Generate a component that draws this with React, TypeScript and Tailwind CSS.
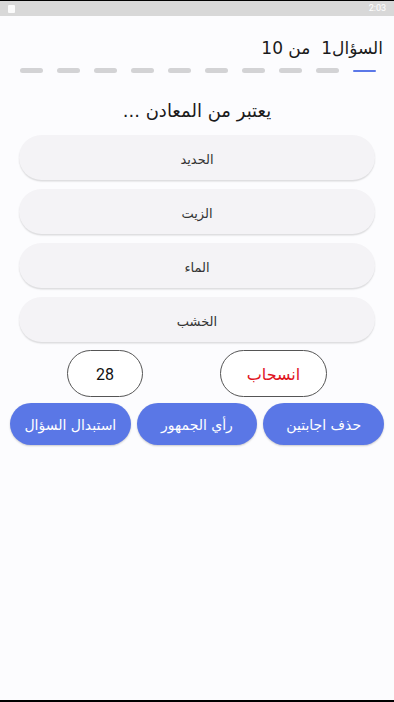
import React from "react";

const options = ["الحديد", "الزيت", "الماء", "الخشب"];
const lifelines = ["حذف اجابتين", "رأي الجمهور", "استبدال السؤال"];

export default function App() {
  return (
    <div
      className="w-[394px] h-[702px] bg-[#fcfcfe] flex flex-col overflow-hidden"
      style={{ fontFamily: '"DejaVu Sans", "Noto Sans", sans-serif' }}
    >
      <div className="h-[16px] bg-[#d8d8d8] border-t border-black flex items-center justify-between px-[8px]">
        <div className="w-[7px] h-[8px] bg-white rounded-[1px] opacity-90" />
        <span className="text-[9px] text-white leading-none" style={{ fontFamily: "Roboto, sans-serif" }}>
          2:03
        </span>
      </div>

      <div dir="rtl" className="flex flex-col flex-1">
        <div className="pt-[20px] pr-[11px] h-[43px]">
          <div className="text-[17px] leading-[24px] text-[#1a1a1a] whitespace-pre">
            السؤال1  من 10
          </div>
        </div>

        <div className="h-[5px] mt-[9px] px-[18px] flex items-center gap-[14px]">
          {Array.from({ length: 10 }).map((_, i) =>
            i === 0 ? (
              <div key={i} className="w-[23px] h-[2px] bg-[#5b78e8] rounded-full" />
            ) : (
              <div key={i} className="w-[23px] h-[5px] bg-[#d3d3d5] rounded-full" />
            )
          )}
        </div>

        <div className="mt-[25px] text-center text-[18px] leading-[26px] text-[#1a1a1a]">
          يعتبر من المعادن ...
        </div>

        <div className="mt-[11px] px-[19px] flex flex-col gap-[9px]">
          {options.map((o) => (
            <div
              key={o}
              className="h-[45px] pt-[4px] rounded-full bg-[#f4f3f6] shadow-[0_1.5px_1.5px_rgba(0,0,0,0.13)] flex items-center justify-center text-[13px] text-[#333]"
            >
              {o}
            </div>
          ))}
        </div>

        <div className="mt-[8px] px-[67px] flex justify-between">
          <div className="w-[107px] h-[47px] pt-[2px] rounded-full border border-[#555] bg-white flex items-center justify-center text-[16px] text-[#e0141e]">
            انسحاب
          </div>
          <div
            className="w-[76px] h-[47px] pt-[2px] rounded-full border border-[#555] bg-white flex items-center justify-center text-[16px] text-[#111]"
            style={{ fontFamily: "Roboto, sans-serif" }}
          >
            28
          </div>
        </div>

        <div className="mt-[6px] px-[10px] flex gap-[6px]">
          {lifelines.map((l) => (
            <div
              key={l}
              className="flex-1 h-[42px] pt-[2px] rounded-full bg-[#5a77e6] shadow-[0_1px_2px_rgba(0,0,0,0.2)] flex items-center justify-center text-[14px] text-white"
            >
              {l}
            </div>
          ))}
        </div>
      </div>
      <div className="h-[2px] bg-black" />
    </div>
  );
}
